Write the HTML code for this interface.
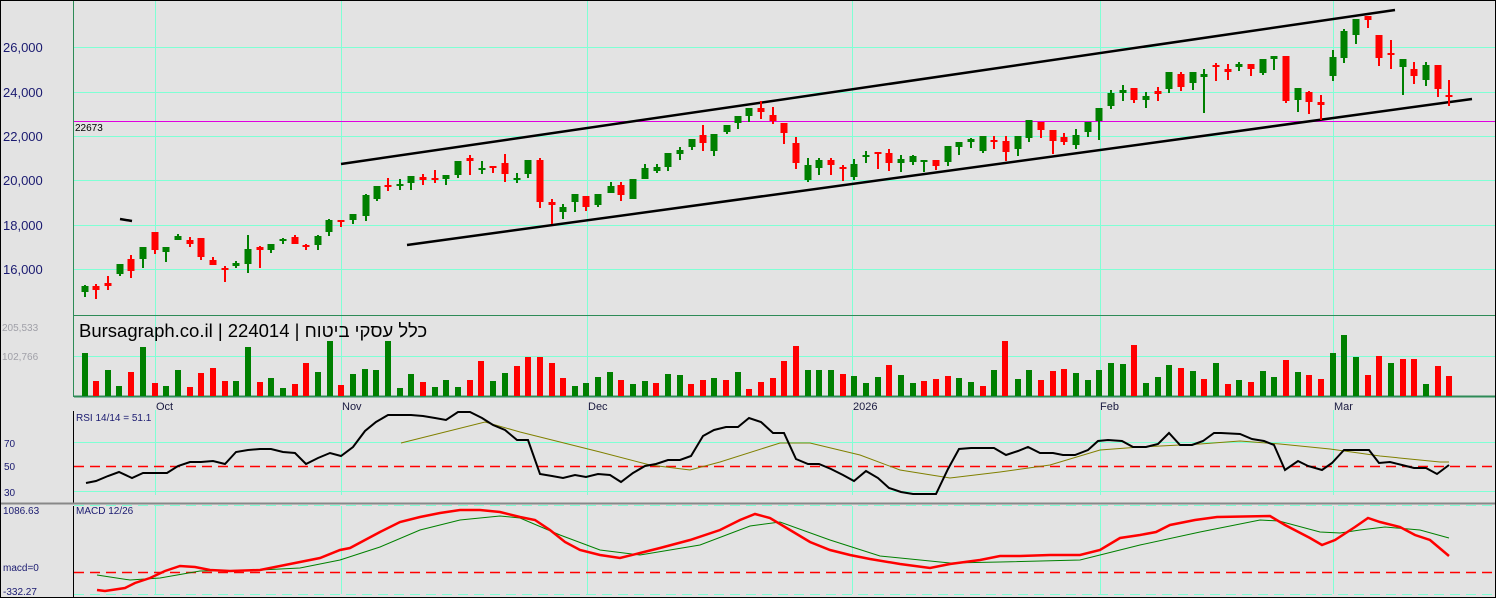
<!DOCTYPE html>
<html><head><meta charset="utf-8"><style>
html,body{margin:0;padding:0;background:#e3e3e3;}
svg{display:block;font-family:"Liberation Sans",Arial,sans-serif;}
</style></head><body>
<svg width="1496" height="598" viewBox="0 0 1496 598" xmlns="http://www.w3.org/2000/svg">
<rect x="0" y="0" width="1496" height="598" fill="#e3e3e3"/>
<g stroke="#7fffd4" stroke-width="1">
<path d="M74 47.5H1495M74 92.5H1495M74 136.5H1495M74 180.5H1495M74 225.5H1495M74 269.5H1495"/>
<path d="M74 356.5H1495M74 442.5H1495M74 491.5H1495"/>
<path d="M155.5 0V397M341.5 0V397M587.5 0V397M852.5 0V397M1100.5 0V397M1333.5 0V397"/>
<path d="M155.5 410V495M341.5 410V495M587.5 410V495M852.5 410V495M1100.5 410V495M1333.5 410V495"/>
<path d="M155.5 506V594M341.5 506V594M587.5 506V594M852.5 506V594M1100.5 506V594M1333.5 506V594"/>
<path d="M74 505.5H1495M74 594.5H1495" stroke-dasharray="10,6"/>
</g>
<path d="M74 121.5H1495" stroke="#e000e0" stroke-width="1"/>
<path d="M73.5 0V397" stroke="#2e8b57" stroke-width="1"/>
<path d="M74 315.5H1495" stroke="#2e8b57" stroke-width="1"/>
<path d="M74 396.5H1495" stroke="#2e8b57" stroke-width="2"/>
<path d="M73.5 411V503M73.5 506V598" stroke="#000" stroke-width="1"/>
<path d="M0 503.5H1496" stroke="#888" stroke-width="2"/>
<g stroke="#000" stroke-width="2.5" fill="none">
<path d="M341 164L1395 10"/>
<path d="M407 245L1472 99"/>
<path d="M120 219L132 221"/>
</g>
<path stroke="#008000" stroke-width="2" fill="none" d="M85 285V297M120 264V276M143 247V268M166 247V262M178 234V240M236 261V268M248 235V273M271 244V253M283 238V244M318 235V250M329 219V236M353 214V224M366 194V221M377 186V201M400 179V190M411 176V190M446 175V185M458 161V178M482 161V174M517 173V183M528 160V178M563 204V219M575 194V212M598 194V207M611 182V193M633 179V199M645 164V179M657 164V173M668 153V171M680 147V160M692 139V150M714 134V156M727 125V134M738 116V129M749 108V122M808 158V182M819 158V175M854 159V180M866 151V163M901 155V172M913 155V165M924 160V172M948 146V166M959 142V155M971 138V148M983 136V153M1018 136V156M1029 120V142M1076 129V149M1088 122V137M1099 108V140M1111 90V109M1123 85V101M1146 92V108M1169 72V93M1193 72V90M1204 69V113M1239 62V71M1263 59V75M1274 56V70M1298 88V112M1333 50V81M1344 29V63M1356 19V44M1403 59V95M1426 62V86"/>
<path stroke="#008000" stroke-width="7" fill="none" d="M85 286V292M120 264V274M143 247V259M166 247V252M178 236V240M236 263V266M248 249V264M271 244V250M283 239V241M318 236V245M329 220V232M353 214V220M366 195V216M377 186V199M400 184V186M411 176V183M446 175V179M458 161V175M482 168V170M517 178V180M528 160V174M563 207V212M575 194V202M598 194V205M611 186V193M633 179V199M645 168V179M657 167V171M668 153V167M680 150V154M692 139V147M714 134V151M727 125V132M738 116V123M749 108V116M808 165V180M819 160V168M854 164V177M866 155V157M901 159V163M913 156V162M924 160V162M948 146V162M959 142V147M971 139V142M983 136V151M1018 136V149M1029 120V138M1076 135V145M1088 122V132M1099 108V121M1111 93V106M1123 90V93M1146 96V100M1169 72V89M1193 72V83M1204 74V77M1239 64V67M1263 59V73M1274 56V59M1298 88V100M1333 57V76M1344 31V58M1356 19V35M1403 59V67M1426 65V80"/>
<path stroke="#ff0000" stroke-width="2" fill="none" d="M96 284V299M108 276V290M131 255V278M155 232V254M190 237V247M201 238V260M213 257V265M225 266V282M260 246V268M295 235V244M306 244V250M341 220V227M388 178V191M423 174V185M435 170V183M470 155V175M493 166V173M505 154V182M540 158V208M552 199V224M586 196V211M621 182V201M703 125V151M761 101V119M773 107V124M784 123V144M796 137V169M831 158V175M843 165V181M878 152V169M889 149V171M936 160V170M994 136V149M1006 136V161M1041 122V138M1053 130V154M1064 133V145M1134 88V103M1158 87V101M1181 72V91M1216 63V81M1228 64V80M1251 64V76M1286 56V103M1309 91V114M1321 95V120M1368 16V28M1379 35V66M1391 40V69M1414 62V84M1438 65V97M1449 80V106"/>
<path stroke="#ff0000" stroke-width="7" fill="none" d="M96 286V290M108 283V286M131 259V271M155 232V250M190 240V244M201 238V257M213 260V265M225 268V270M260 247V250M295 237V244M306 245V247M341 220V222M388 185V187M423 177V180M435 178V180M470 158V161M493 166V168M505 163V174M540 160V202M552 202V205M586 196V207M621 185V195M703 135V143M761 108V112M773 115V121M784 123V133M796 143V163M831 160V165M843 167V169M878 152V154M889 153V163M936 160V166M994 140V142M1006 141V152M1041 122V130M1053 130V141M1064 137V142M1134 88V100M1158 91V94M1181 74V87M1216 65V67M1228 69V72M1251 64V69M1286 56V101M1309 92V102M1321 102V105M1368 16V20M1379 35V58M1391 53V55M1414 69V76M1438 65V89M1449 95V97"/>
<path stroke="#008000" stroke-width="6" fill="none" d="M85 353V396M108 370V396M119 386V396M143 347V396M166 386V396M178 370V396M236 381V396M248 347V396M271 378V396M283 388V396M318 372V396M330 341V396M353 374V396M365 369V396M376 370V396M388 341V396M400 388V396M411 374V396M435 387V396M446 380V396M458 387V396M493 381V396M505 373V396M575 386V396M586 383V396M598 377V396M610 372V396M633 384V396M645 381V396M668 374V396M680 375V396M714 378V396M738 372V396M808 370V396M819 370V396M831 370V396M854 376V396M866 383V396M878 377V396M901 375V396M913 383V396M959 378V396M971 382V396M994 370V396M1018 379V396M1029 370V396M1076 373V396M1088 380V396M1099 370V396M1111 363V396M1123 364V396M1146 383V396M1158 377V396M1169 365V396M1193 371V396M1216 363V396M1239 380V396M1263 371V396M1274 377V396M1298 372V396M1333 353V396M1344 335V396M1356 357V396M1391 363V396M1426 384V396"/>
<path stroke="#ff0000" stroke-width="6" fill="none" d="M96 381V396M131 372V396M155 383V396M190 387V396M201 373V396M213 368V396M225 381V396M260 382V396M295 384V396M306 363V396M341 385V396M423 382V396M470 380V396M481 361V396M517 366V396M528 357V396M540 357V396M552 363V396M563 378V396M621 380V396M656 383V396M691 384V396M703 380V396M726 380V396M749 389V396M761 382V396M773 378V396M784 361V396M796 346V396M843 374V396M889 365V396M924 381V396M936 379V396M948 376V396M983 386V396M1005 341V396M1041 380V396M1053 371V396M1064 369V396M1134 345V396M1181 368V396M1204 379V396M1228 384V396M1251 382V396M1286 360V396M1309 375V396M1321 379V396M1368 375V396M1379 356V396M1403 359V396M1414 359V396M1438 366V396M1449 376V396"/>
<path d="M74 466.5H1495" stroke="#ff0000" stroke-width="1.5" stroke-dasharray="10,6"/>
<path fill="none" stroke="#808000" stroke-width="1" d="M401 443L485 422L520 432L560 442L600 452L650 465L690 470L720 462L780 443L810 443L860 455L900 470L950 478L1000 472L1050 465L1100 450L1140 447L1200 444L1240 441L1280 444L1330 449L1380 456L1440 462L1449 462"/>
<path fill="none" stroke="#000" stroke-width="2" d="M86 483L96 481L108 476L119 472L132 478L143 473L155 473L167 473L178 466L190 462L201 462L213 461L225 464L236 452L248 450L260 449L271 449L283 452L295 453L306 464L318 458L330 453L341 456L353 447L365 431L376 422L388 415L400 415L411 415L423 416L435 418L446 420L458 412L470 412L482 418L493 425L505 430L517 440L528 440L540 474L552 476L563 478L575 475L586 477L598 474L610 475L621 482L633 473L645 466L656 464L668 460L680 460L691 456L703 436L714 430L726 427L738 427L749 418L761 422L773 433L784 433L796 459L808 464L819 464L831 469L843 475L854 481L866 471L878 478L889 488L901 492L913 494L924 494L936 494L948 469L959 449L971 448L983 448L994 448L1006 455L1018 451L1028 447L1040 453L1053 453L1063 455L1075 455L1088 450L1098 441L1108 440L1122 441L1133 447L1146 447L1158 444L1169 433L1180 445L1192 445L1203 441L1214 433L1221 433L1240 434L1252 439L1264 441L1274 445L1285 470L1298 461L1308 466L1322 470L1332 463L1344 450L1357 450L1369 450L1379 463L1390 462L1402 465L1414 468L1426 468L1437 474L1449 465"/>
<path d="M74 572.5H1495" stroke="#ff0000" stroke-width="1.5" stroke-dasharray="10,6"/>
<path fill="none" stroke="#008000" stroke-width="1" d="M97 575L130 580L160 578L200 571L260 570L300 568L340 560L380 547L420 530L460 520L500 516L520 518L560 535L600 550L640 555L700 545L750 526L780 522L830 540L880 556L950 563L1000 562L1080 560L1100 555L1140 545L1200 532L1260 520L1279 521L1320 532L1340 533L1360 530L1385 527L1420 530L1449 538"/>
<path fill="none" stroke="#ff0000" stroke-width="2.5" d="M97 590L105 591L125 588L135 583L150 578L165 571L180 566L195 567L210 570L230 571L260 570L280 566L300 562L320 558L340 550L350 548L365 540L380 532L400 522L420 517L440 513L460 510L480 510L500 512L520 517L535 520L550 530L565 542L580 550L600 555L620 558L640 553L660 548L690 540L720 530L740 520L755 514L770 518L790 530L810 542L830 550L850 555L870 559L900 564L930 568L950 564L980 560L1000 556L1020 556L1050 555L1080 555L1100 550L1120 538L1140 535L1156 532L1170 525L1195 520L1217 517L1270 516L1285 525L1310 538L1322 545L1335 540L1355 527L1368 518L1380 522L1400 527L1415 535L1430 540L1449 556"/>
<g fill="#1a1a70" font-size="13">
<text x="3" y="52">26,000</text>
<text x="3" y="97">24,000</text>
<text x="3" y="141">22,000</text>
<text x="3" y="185">20,000</text>
<text x="3" y="230">18,000</text>
<text x="3" y="274">16,000</text>
</g>
<text x="75" y="131" font-size="10" fill="#000">22673</text>
<g fill="#a0a0a8" font-size="10">
<text x="2" y="331">205,533</text>
<text x="2" y="360">102,766</text>
</g>
<text x="79" y="337" font-size="18.5" fill="#000" font-family="'Liberation Sans','Noto Sans CJK JP',sans-serif">Bursagraph.co.il | 224014 | כלל עסקי ביטוח</text>
<g fill="#1a1a40" font-size="11">
<text x="156" y="410">Oct</text>
<text x="342" y="410">Nov</text>
<text x="588" y="410">Dec</text>
<text x="853" y="410">2026</text>
<text x="1100" y="410">Feb</text>
<text x="1334" y="410">Mar</text>
</g>
<g fill="#1a1a70" font-size="10">
<text x="76" y="421">RSI 14/14 = 51.1</text>
<text x="4" y="447">70</text>
<text x="4" y="470">50</text>
<text x="4" y="496">30</text>
<text x="76" y="514">MACD 12/26</text>
<text x="3" y="514">1086.63</text>
<text x="3" y="571">macd=0</text>
<text x="3" y="595">-332.27</text>
</g>
<rect x="0.5" y="0.5" width="1495" height="597" fill="none" stroke="#000" stroke-width="1"/>
</svg>
</body></html>
